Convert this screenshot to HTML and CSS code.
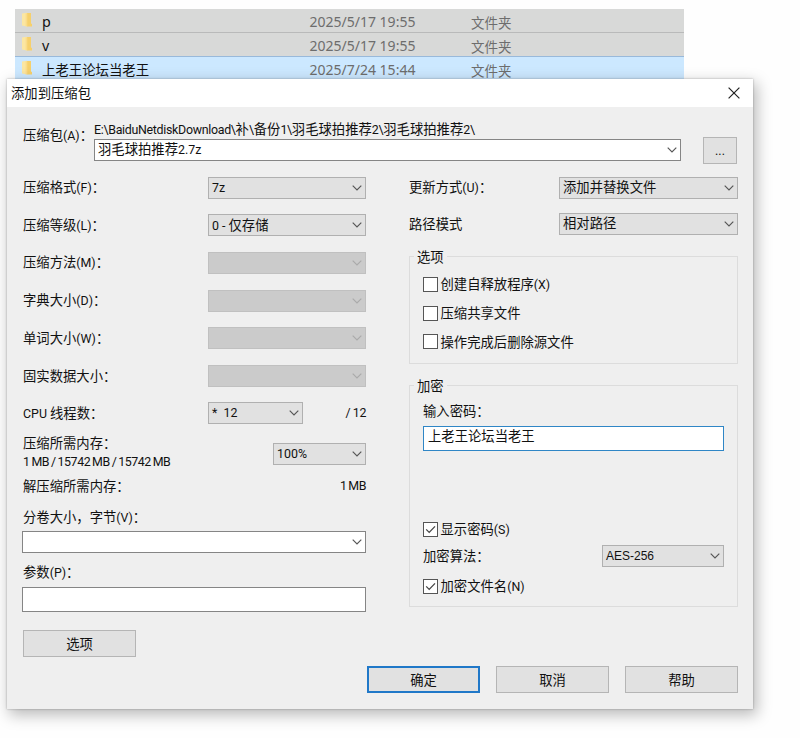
FILE: index.html
```html
<!DOCTYPE html>
<html lang="zh-CN">
<head>
<meta charset="utf-8">
<title>添加到压缩包</title>
<link rel="stylesheet" href="styles.css">
</head>
<body>
<svg width="0" height="0" class="defs">
  <symbol id="chev" viewBox="0 0 10 6"><path d="M.7 .7L5 5L9.3 .7" fill="none" stroke="currentColor" stroke-width="1.15"/></symbol>
  <symbol id="check" viewBox="0 0 13 13"><path d="M2.2 6.4L5.2 9.4L11 3.4" fill="none" stroke="#444" stroke-width="1.3"/></symbol>
  <symbol id="folder" viewBox="0 0 12 16"><path d="M1 1.5L6 .8V14.6L1 13.6Z" fill="#fbe6a2"/><path d="M6 1H10V11.5L11 12V14.5H6Z" fill="#f6d06c"/><path d="M4.6 1.2H6.3V14.6L4.6 14.2Z" fill="#fadc8a"/></symbol>
</svg>

<div class="files">
  <div class="file"><svg class="folder"><use href="#folder"/></svg><span class="name">p</span><span class="date">2025/5/17 19:55</span><span class="type">文件夹</span></div>
  <div class="file"><svg class="folder"><use href="#folder"/></svg><span class="name">v</span><span class="date">2025/5/17 19:55</span><span class="type">文件夹</span></div>
  <div class="file selected"><svg class="folder"><use href="#folder"/></svg><span class="name">上老王论坛当老王</span><span class="date">2025/7/24 15:44</span><span class="type">文件夹</span></div>
</div>

<div class="dialog">
  <div class="titlebar"><span>添加到压缩包</span><svg class="close" viewBox="0 0 12 12"><path d="M.6 .6L11.4 11.4M11.4 .6L.6 11.4" stroke="#222" stroke-width="1.2"/></svg></div>

  <div class="archive">
    <div class="archive-label">压缩包<span class="en">(A)</span>：</div>
    <div class="archive-main">
      <div class="path"><span class="en">E:\BaiduNetdiskDownload\</span>补<span class="en">\</span>备份<span class="en">1\</span>羽毛球拍推荐<span class="en">2\</span>羽毛球拍推荐<span class="en">2\</span></div>
      <div class="combo editable"><span>羽毛球拍推荐<span class="en">2.7z</span></span><svg class="chev"><use href="#chev"/></svg></div>
    </div>
    <div class="btn browse"><span class="en">...</span></div>
  </div>

  <div class="columns">
    <div class="left">
      <div class="row"><span>压缩格式<span class="en">(F)</span>：</span><div class="combo"><span class="en">7z</span><svg class="chev"><use href="#chev"/></svg></div></div>
      <div class="row"><span>压缩等级<span class="en">(L)</span>：</span><div class="combo"><span><span class="en">0 - </span>仅存储</span><svg class="chev"><use href="#chev"/></svg></div></div>
      <div class="row"><span>压缩方法<span class="en">(M)</span>：</span><div class="combo disabled"><span></span><svg class="chev"><use href="#chev"/></svg></div></div>
      <div class="row"><span>字典大小<span class="en">(D)</span>：</span><div class="combo disabled"><span></span><svg class="chev"><use href="#chev"/></svg></div></div>
      <div class="row"><span>单词大小<span class="en">(W)</span>：</span><div class="combo disabled"><span></span><svg class="chev"><use href="#chev"/></svg></div></div>
      <div class="row"><span>固实数据大小：</span><div class="combo disabled"><span></span><svg class="chev"><use href="#chev"/></svg></div></div>
      <div class="row threads"><span><span class="en">CPU </span>线程数：</span><div class="combo"><span class="en star">*&nbsp; 12</span><svg class="chev"><use href="#chev"/></svg></div><span class="en total">/ 12</span></div>
      <div class="memory">
        <div><div class="line">压缩所需内存：</div><div class="line en tight">1 MB / 15742 MB / 15742 MB</div></div>
        <div class="combo"><span class="en">100%</span><svg class="chev"><use href="#chev"/></svg></div>
      </div>
      <div class="unpack"><span>解压缩所需内存：</span><span class="en tight">1 MB</span></div>
      <div class="field-label">分卷大小，字节<span class="en">(V)</span>：</div>
      <div class="combo editable volume"><span></span><svg class="chev"><use href="#chev"/></svg></div>
      <div class="field-label params-label">参数<span class="en">(P)</span>：</div>
      <div class="input params"></div>
      <div class="btn options">选项</div>
    </div>

    <div class="right">
      <div class="row"><span>更新方式<span class="en">(U)</span>：</span><div class="combo"><span>添加并替换文件</span><svg class="chev"><use href="#chev"/></svg></div></div>
      <div class="row second"><span>路径模式</span><div class="combo"><span>相对路径</span><svg class="chev"><use href="#chev"/></svg></div></div>
      <fieldset class="group opts">
        <legend>选项</legend>
        <div class="check"><svg class="box"></svg><span>创建自释放程序<span class="en">(X)</span></span></div>
        <div class="check"><svg class="box"></svg><span>压缩共享文件</span></div>
        <div class="check"><svg class="box"></svg><span>操作完成后删除源文件</span></div>
      </fieldset>
      <fieldset class="group crypt">
        <legend>加密</legend>
        <div class="pw-label">输入密码：</div>
        <div class="input password">上老王论坛当老王</div>
        <div class="check show"><svg class="box"><use href="#check"/></svg><span>显示密码<span class="en">(S)</span></span></div>
        <div class="algo"><span>加密算法：</span><div class="combo"><span class="en arial">AES-256</span><svg class="chev"><use href="#chev"/></svg></div></div>
        <div class="check names"><svg class="box"><use href="#check"/></svg><span>加密文件名<span class="en">(N)</span></span></div>
      </fieldset>
    </div>
  </div>

  <div class="footer"><div class="btn primary">确定</div><div class="btn">取消</div><div class="btn">帮助</div></div>
</div>
</body>
</html>
```
FILE: styles.css
```css
* { box-sizing: border-box; }
body {
  margin: 0;
  width: 800px;
  height: 738px;
  overflow: hidden;
  position: relative;
  background: #fefefe;
  color: #111;
  font: 13.33px/20px "Noto Sans CJK SC", sans-serif;
  white-space: nowrap;
}
.defs { position: absolute; }
.en { font-family: Roboto, sans-serif; font-size: 12.4px; }
.path .en { letter-spacing: -.3px; }
.tight { letter-spacing: -.45px; word-spacing: -.7px; }
.arial { font-family: "Liberation Sans", sans-serif; font-size: 12px; }

.files { padding: 9px 0 0 15px; width: 684px; }
.file {
  height: 24px;
  display: grid;
  grid-template-columns: 27px 267.5px 161.5px 1fr;
  align-items: center;
  background: #d8d9d8;
  border-bottom: 1px solid #b9baba;
}
.file.selected { background: #cce8ff; border-top: 1px solid #99b9da; margin-top: -1px; height: 25px; }
.folder { width: 12px; height: 16px; margin: -2px 0 0 6px; }
.name { font: 13.4px/22px "Noto Sans", "Noto Sans CJK SC", sans-serif; padding-top: 2px; }
.file:not(.selected) .name { font-size: 14.3px; }
.date { font: 14px/22px "Noto Sans", sans-serif; color: #6d6d6d; padding-top: 2px; }
.type { font-size: 13.5px; color: #6d6d6d; padding-top: 2px; }

.dialog {
  position: absolute;
  left: 7px;
  top: 79px;
  width: 746px;
  height: 630px;
  background: #efefef;
  box-shadow: 0 0 2px rgba(0,0,0,.3), 3px 5px 14px 1px rgba(0,0,0,.27);
}
.titlebar {
  height: 28px;
  background: #fff;
  display: flex;
  justify-content: space-between;
  align-items: center;
  padding: 0 13px 0 4px;
}
.close { width: 12px; height: 12px; }

.combo {
  height: 22px;
  background: #e1e1e1;
  border: 1px solid #b0b0b0;
  display: flex;
  align-items: center;
  justify-content: space-between;
  padding: 0 3px;
  color: #111;
}
.chev { width: 10px; height: 6px; color: #555; flex: none; }
.combo.editable { background: #fff; border-color: #858585; }
.combo.disabled { background: #cbcbcb; border-color: #c0c0c0; }
.combo.disabled .chev { color: #aaa; }
.input { background: #fff; border: 1px solid #858585; }
.btn {
  width: 113px;
  height: 27px;
  background: #e1e1e1;
  border: 1px solid #b5b5b5;
  display: flex;
  align-items: center;
  justify-content: center;
}
.btn.primary { border: 2px solid #2078c8; }

.archive { display: flex; height: 62px; padding: 12px 16px 0 16px; }
.archive-label { width: 71px; padding-top: 6px; }
.archive-main { width: 587px; }
.path { height: 20px; }
.archive-main .combo > span { padding-bottom: 1px; }
.browse { width: 34px; height: 27px; margin: 18px 0 0 22px; }

.columns { display: flex; gap: 43px; padding: 0 15px 0 16px; height: 490px; }
.left { width: 343px; }
.right { width: 329px; }
.row { display: flex; align-items: center; justify-content: space-between; height: 37.6px; }
.row .combo { width: 158px; }
.row.threads { justify-content: flex-start; }
.threads > span:first-child { width: 185px; }
.threads .combo { width: 95px; }
.total { margin-left: auto; letter-spacing: -.4px; }
.memory { height: 43px; display: flex; justify-content: space-between; padding-top: 1px; }
.memory .line { line-height: 19px; }
.memory .combo { width: 93px; margin-top: 10px; }
.unpack { display: flex; justify-content: space-between; height: 20px; margin-top: 1px; }
.field-label { margin-top: 11px; height: 20px; }
.volume { margin: 4px 0 0 -1px; }
.params-label { margin-top: 9px; }
.params { height: 25px; margin: 5px 0 0 -1px; }
.options { margin-top: 18px; }

.right .row .combo { width: 179px; }
.right .row .combo span { padding-bottom: 1px; }
.right .row.second { height: 34px; }
.group {
  margin: 0;
  padding: 0 13px;
  border: 1px solid #dcdcdc;
  min-width: 0;
}
.group legend { padding: 0 3px; margin-left: -9px; height: 20px; }
.opts { height: 117px; margin-top: 6px; }
.crypt { height: 231px; margin-top: 12px; }
.check { display: flex; align-items: center; gap: 2.5px; height: 20px; margin-bottom: 8.5px; }
.opts .check:nth-of-type(1) { margin-top: 8px; }
.box { width: 15px; height: 15px; background: #fff; border: 1px solid #555; flex: none; }
.pw-label { height: 20px; margin-top: 5px; }
.password { height: 25px; width: 301px; border: 1px solid #2f86c6; padding-left: 4px; line-height: 17px; margin-top: 5px; }
.check.show { margin: 69px 0 0; }
.algo { display: flex; justify-content: space-between; align-items: center; height: 22px; margin-top: 5px; width: 301px; }
.algo .combo { width: 122px; }
.check.names { margin: 10px 0 0; }

.footer { display: flex; justify-content: flex-end; gap: 16px; padding: 7px 15px 0 0; }
```
